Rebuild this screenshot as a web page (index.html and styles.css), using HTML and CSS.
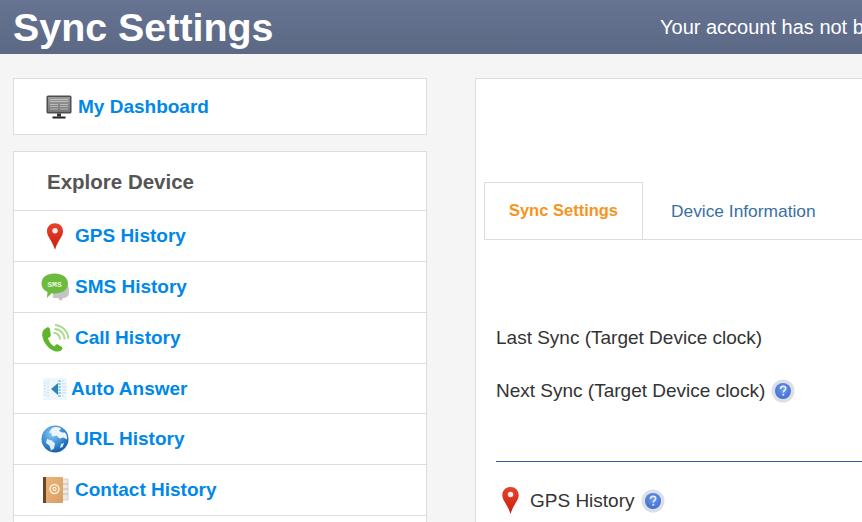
FILE: index.html
```html
<!DOCTYPE html>
<html lang="en">
<head>
<meta charset="utf-8">
<title>Sync Settings</title>
<link rel="stylesheet" href="styles.css">
</head>
<body>
<svg class="defs" width="0" height="0" aria-hidden="true">
  <defs>
    <linearGradient id="pinGrad" x1="0" y1="0" x2="0" y2="1">
      <stop offset="0" stop-color="#e8412c"/><stop offset="1" stop-color="#c9200c"/>
    </linearGradient>
    <linearGradient id="screenGrad" x1="0" y1="0" x2="0" y2="1">
      <stop offset="0" stop-color="#9a9a9a"/><stop offset="1" stop-color="#777"/>
    </linearGradient>
    <radialGradient id="globeGrad" cx="0.4" cy="0.3" r="0.8">
      <stop offset="0" stop-color="#8ccbf2"/><stop offset="0.6" stop-color="#2f83cc"/><stop offset="1" stop-color="#124d8e"/>
    </radialGradient>
    <radialGradient id="helpGrad" cx="0.5" cy="0.4" r="0.6">
      <stop offset="0" stop-color="#6f9bea"/><stop offset="1" stop-color="#3f6fd0"/>
    </radialGradient>
    <linearGradient id="bookGrad" x1="0" y1="0" x2="1" y2="1">
      <stop offset="0" stop-color="#eab67c"/><stop offset="1" stop-color="#d99f62"/>
    </linearGradient>
    <symbol id="pin" viewBox="0.8 0.5 16.4 27">
      <path d="M9 0.5C4.2 0.5 0.8 4 0.8 8.6c0 5.6 5.4 9.6 8.2 18.9 2.8-9.3 8.2-13.3 8.2-18.9C17.2 4 13.8 0.5 9 0.5z" fill="url(#pinGrad)"/>
      <circle cx="9" cy="8" r="2.8" fill="#fff" opacity=".9"/>
    </symbol>
    <symbol id="help" viewBox="0 0 24 24">
      <circle cx="12" cy="12" r="11.5" fill="#dcdfe6"/>
      <circle cx="12" cy="12" r="8" fill="url(#helpGrad)"/>
      <path d="M9.4 9.8c.2-1.6 1.3-2.4 2.7-2.4 1.5 0 2.6.9 2.6 2.2 0 1.9-2.4 1.9-2.4 3.8" fill="none" stroke="#e6edfb" stroke-width="1.6"/>
      <circle cx="12.3" cy="15.8" r="1" fill="#e6edfb"/>
    </symbol>
  </defs>
</svg>

<header class="topbar">
  <h1 class="title">Sync Settings</h1>
  <p class="notice">Your account has not been linked to a device yet</p>
</header>

<div class="page">
  <aside class="sidebar">
    <nav class="card dash">
      <a class="link dash-link" href="#">
        <svg class="ico-monitor" viewBox="0 0 26 24">
          <rect x="0.5" y="0.5" width="25" height="18" rx="1.5" fill="#4d4d4d"/>
          <rect x="2" y="2" width="22" height="15" fill="url(#screenGrad)"/>
          <path d="M4 4.500h18M4 6.500h18M4 9.500h8M14 9.500h8M4 11.500h8M14 11.500h8M4 14h8M14 14h8" stroke="#dcdcdc" stroke-opacity=".6" stroke-width="1"/>
          <rect x="11" y="18.500" width="4" height="3" fill="#333"/>
          <rect x="6.500" y="21.500" width="13" height="2" fill="#222"/>
        </svg>
        <span>My Dashboard</span>
      </a>
    </nav>

    <nav class="card explore">
      <h2 class="explore-title">Explore Device</h2>
      <a class="row link" href="#">
        <svg class="ico ico-pin"><use href="#pin"/></svg>
        <span>GPS History</span>
      </a>
      <a class="row link" href="#">
        <svg class="ico ico-wide" viewBox="0 0 28 28">
          <path d="M12 12h12a4 4 0 0 1 4 4v4a5 5 0 0 1-5 5h-1l-2 3-3-3h-5z" fill="#c4c4c4"/>
          <path d="M13.500 0.500c7.500 0 13.500 3.500 13.500 10s-6 10-13.500 10c-1 0-2-.1-3-.2L6 25l.5-6C3 17.500 0.500 14.500 0.500 10.500 0.500 4 6 0.500 13.500 0.500z" fill="#6cbb3e"/>
          <text x="13.500" y="13.500" class="sms-text">SMS</text>
        </svg>
        <span>SMS History</span>
      </a>
      <a class="row link" href="#">
        <svg class="ico ico-wide" viewBox="0 0 28 28">
          <path d="M6 3.500c-4 1.500-5.500 5-4.500 9.500 1.500 6.500 6.500 12 11.500 14 3.500 1.200 6.500.5 8-1.500.8-1 .5-2-.5-2.700l-3.500-2.300c-1-.6-1.800-.4-2.500.4l-1.300 1.500c-2.700-1.500-5.500-5-6.200-8.500l1.800-1c1-.6 1.200-1.400.9-2.400L8.900 5c-.5-1.300-1.700-2-2.900-1.500z" fill="#5fb52d"/>
          <path d="M12.500 9a6 6 0 0 1 6.500 6.500M13.500 5a10 10 0 0 1 10 10.500M14 1a14.500 14.500 0 0 1 13.500 14" fill="none" stroke="#a9d88e" stroke-width="2"/>
        </svg>
        <span>Call History</span>
      </a>
      <a class="row link row-tight" href="#">
        <svg class="ico ico-speaker" viewBox="0 0 24 24">
          <rect x="0" y="1" width="24" height="22" fill="#f0f7fb"/>
          <path d="M2 5v14M5 3v18M20 3v18M22 6v12" stroke="#c5e3f4" stroke-width="1.500" stroke-dasharray="1.500 1.500"/>
          <path d="M8 12l7-6v12z" fill="#2f86ad"/>
          <path d="M16.500 3v18" stroke="#8fcbe8" stroke-width="2.500" stroke-dasharray="2 1"/>
        </svg>
        <span>Auto Answer</span>
      </a>
      <a class="row link" href="#">
        <svg class="ico ico-wide" viewBox="0 0 28 28">
          <circle cx="14" cy="14" r="13.500" fill="url(#globeGrad)"/>
          <path d="M11 3c3-1.500 7-1 9 .5l-2 2.500 3 1.500 3 0c2 2.500 2.500 5 2 7l-3.500-2-4 1-3-3-4 1-1.500-3.500L8 7.500z" fill="#eef5fb"/>
          <path d="M6 14l5 1.500 3 3-1 5-3 2-1.500-5L5 18z" fill="#dfeef9"/>
          <path d="M20 19l3-1-1.500 4-2.500 1z" fill="#dfeef9"/>
        </svg>
        <span>URL History</span>
      </a>
      <a class="row link" href="#">
        <svg class="ico ico-wide" viewBox="0 0 28 28">
          <rect x="21" y="3" width="6" height="21" fill="#eeeae2" stroke="#bfb9ad" stroke-width=".6"/>
          <path d="M21 8h6M21 13h6M21 18h6" stroke="#b3ac9f" stroke-width=".8"/>
          <rect x="2" y="1" width="20" height="26" rx="1" fill="url(#bookGrad)"/>
          <rect x="2" y="1" width="3" height="26" fill="#6b4426"/>
          <circle cx="13.500" cy="13" r="4.500" fill="none" stroke="#fff3e2" stroke-width="1.400"/>
          <circle cx="13.500" cy="13" r="1.600" fill="none" stroke="#fff3e2" stroke-width="1.100"/>
        </svg>
        <span>Contact History</span>
      </a>
      <a class="row link" href="#"></a>
    </nav>
  </aside>

  <main class="panel">
    <div class="tabs">
      <a class="tab tab-active" href="#">Sync Settings</a>
      <a class="tab" href="#">Device Information</a>
    </div>
    <div class="tab-body">
      <div class="field">Last Sync (Target Device clock)</div>
      <div class="field">
        <span>Next Sync (Target Device clock)</span>
        <svg class="help"><use href="#help"/></svg>
      </div>
      <hr class="divider">
      <div class="field gps">
        <svg class="ico-pin-small"><use href="#pin"/></svg>
        <span>GPS History</span>
        <svg class="help"><use href="#help"/></svg>
      </div>
    </div>
  </main>
</div>
</body>
</html>
```

FILE: styles.css
```css
* { box-sizing: border-box; }

html, body {
  margin: 0;
  height: 100%;
  overflow: hidden;
}

body {
  width: 1200px;
  background: #f5f5f5;
  font-family: "Liberation Sans", Arial, sans-serif;
  color: #333;
}

.defs { position: absolute; }

.topbar {
  height: 54px;
  display: flex;
  align-items: center;
  padding-left: 13px;
  background: linear-gradient(#667391, #5c6985);
  color: #fff;
  white-space: nowrap;
}

.title {
  margin: 0;
  width: 647px;
  font-size: 39.4px;
  font-weight: 700;
  line-height: 54px;
}

.notice {
  margin: 0;
  font-size: 20px;
}

.page {
  display: flex;
  align-items: flex-start;
  gap: 48px;
  padding: 24px 0 0 13px;
}

.sidebar {
  width: 414px;
  flex: none;
  display: flex;
  flex-direction: column;
  gap: 16px;
}

.card {
  display: block;
  background: #fff;
  border: 1px solid #ddd;
}

.link {
  color: #0088e8;
  font-weight: 700;
  font-size: 19px;
  text-decoration: none;
  white-space: nowrap;
}

.dash {
  height: 57px;
  display: flex;
  align-items: center;
  padding-left: 32px;
}

.dash-link {
  display: flex;
  align-items: center;
  gap: 6px;
}

.ico-monitor {
  width: 26px;
  height: 24px;
}

.explore-title {
  margin: 0;
  height: 58px;
  padding-left: 33px;
  font-size: 20.5px;
  font-weight: 700;
  line-height: 60px;
  color: #555;
}

.row {
  height: 51px;
  display: flex;
  align-items: center;
  gap: 6px;
  padding-left: 27px;
  border-top: 1px solid #ddd;
}

.row-tight {
  gap: 4px;
  height: 50px;
}

.ico { flex: none; }

.ico-pin {
  width: 16px;
  height: 27px;
  margin: 0 6px;
}

.ico-wide {
  width: 28px;
  height: 28px;
}

.ico-speaker {
  width: 24px;
  height: 24px;
  margin-left: 2px;
}

.sms-text {
  font-family: "Liberation Mono", monospace;
  font-size: 8px;
  font-weight: 700;
  fill: #e8f6dc;
  text-anchor: middle;
}

.panel {
  width: 800px;
  height: 600px;
  flex: none;
  background: #fff;
  border: 1px solid #ddd;
  padding: 103px 8px 0;
}

.tabs {
  display: flex;
  height: 58px;
  border-bottom: 1px solid #ddd;
}

.tab {
  display: flex;
  align-items: center;
  justify-content: center;
  height: 57px;
  padding: 2px 28px 0;
  font-size: 17.35px;
  color: #3a6f9f;
  text-decoration: none;
  white-space: nowrap;
}

.tab-active {
  width: 159px;
  padding: 0 0 2px;
  height: 58px;
  background: #fff;
  border: 1px solid #ddd;
  color: #f7941d;
  font-weight: 700;
  font-size: 16.5px;
}

.tab-body {
  padding: 71px 12px 0;
  font-size: 19px;
}

.field {
  display: flex;
  align-items: center;
  gap: 6px;
  height: 53px;
  white-space: nowrap;
}

.help {
  width: 24px;
  height: 24px;
  flex: none;
}

.divider {
  margin: 44px 0 0;
  border: 0;
  border-top: 1px solid #2a6496;
}

.gps {
  margin-top: 12px;
}

.ico-pin-small {
  width: 17px;
  height: 27px;
  margin: 0 5px 0 6px;
  flex: none;
}
```
